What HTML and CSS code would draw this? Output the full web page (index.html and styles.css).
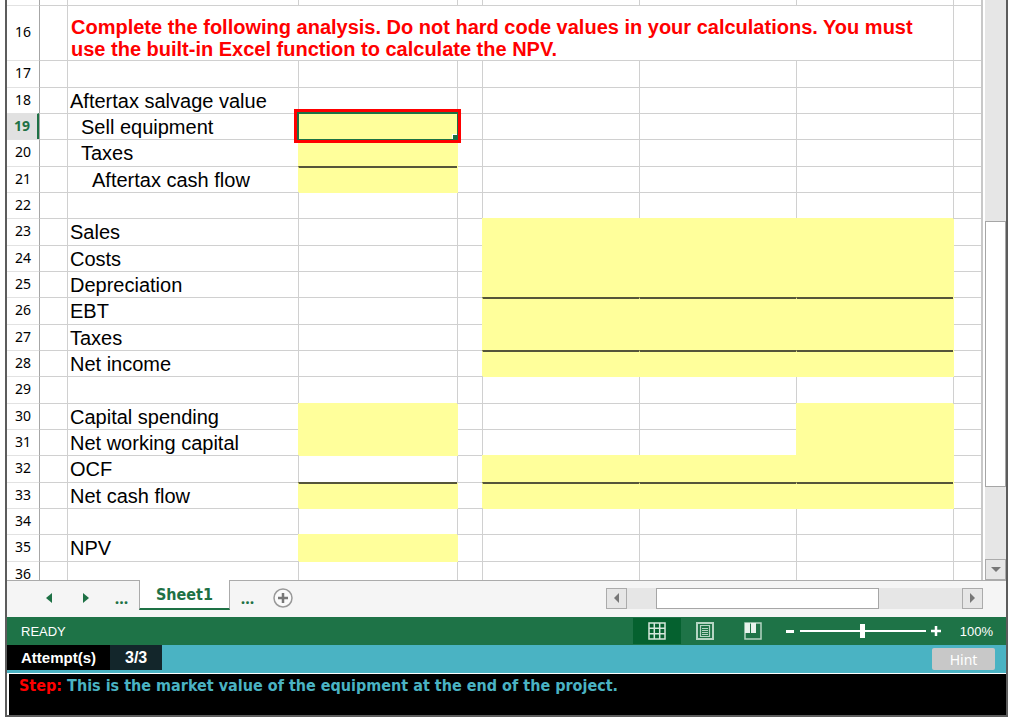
FILE: index.html
```html
<!DOCTYPE html>
<html lang="en">
<head>
    <meta charset="UTF-8">
    <title>Sheet1</title>
    <link rel="stylesheet" href="styles.css">
</head>
<body>
    <div class="window">
        <div class="workspace">
            <div class="sheet">
                <table class="grid">
                    <colgroup>
                        <col class="col-num">
                        <col class="col-a">
                        <col class="col-b">
                        <col class="col-c">
                        <col class="col-d">
                        <col><col><col>
                        <col class="col-h">
                    </colgroup>
                    <tbody>
                        <tr class="row-cut"><th></th><td></td><td></td><td></td><td></td><td></td><td></td><td></td><td></td></tr>
                        <tr class="row-title"><th>16</th><td></td><td class="title" colspan="6">Complete the following analysis. Do not hard code values in your calculations. You must use the built-in Excel function to calculate the NPV.</td><td></td></tr>
                        <tr><th>17</th><td></td><td></td><td></td><td></td><td></td><td></td><td></td><td></td></tr>
                        <tr><th>18</th><td></td><td>Aftertax salvage value</td><td></td><td></td><td></td><td></td><td></td><td></td></tr>
                        <tr><th class="active">19</th><td></td><td class="indent1">Sell equipment</td><td class="fill selected"><input aria-label="Sell equipment"></td><td></td><td></td><td></td><td></td><td></td></tr>
                        <tr><th>20</th><td></td><td class="indent1">Taxes</td><td class="fill"><input aria-label="Taxes on sale"></td><td></td><td></td><td></td><td></td><td></td></tr>
                        <tr><th>21</th><td></td><td class="indent2">Aftertax cash flow</td><td class="fill total"><input aria-label="Aftertax cash flow"></td><td></td><td></td><td></td><td></td><td></td></tr>
                        <tr><th>22</th><td></td><td></td><td></td><td></td><td></td><td></td><td></td><td></td></tr>
                        <tr><th>23</th><td></td><td>Sales</td><td></td><td></td><td class="fill"><input aria-label="Sales year 1"></td><td class="fill"><input aria-label="Sales year 2"></td><td class="fill"><input aria-label="Sales year 3"></td><td></td></tr>
                        <tr><th>24</th><td></td><td>Costs</td><td></td><td></td><td class="fill"><input aria-label="Costs year 1"></td><td class="fill"><input aria-label="Costs year 2"></td><td class="fill"><input aria-label="Costs year 3"></td><td></td></tr>
                        <tr><th>25</th><td></td><td>Depreciation</td><td></td><td></td><td class="fill"><input aria-label="Depreciation year 1"></td><td class="fill"><input aria-label="Depreciation year 2"></td><td class="fill"><input aria-label="Depreciation year 3"></td><td></td></tr>
                        <tr><th>26</th><td></td><td>EBT</td><td></td><td></td><td class="fill total"><input aria-label="EBT year 1"></td><td class="fill total"><input aria-label="EBT year 2"></td><td class="fill total"><input aria-label="EBT year 3"></td><td></td></tr>
                        <tr><th>27</th><td></td><td>Taxes</td><td></td><td></td><td class="fill"><input aria-label="Taxes year 1"></td><td class="fill"><input aria-label="Taxes year 2"></td><td class="fill"><input aria-label="Taxes year 3"></td><td></td></tr>
                        <tr><th>28</th><td></td><td>Net income</td><td></td><td></td><td class="fill total"><input aria-label="Net income year 1"></td><td class="fill total"><input aria-label="Net income year 2"></td><td class="fill total"><input aria-label="Net income year 3"></td><td></td></tr>
                        <tr><th>29</th><td></td><td></td><td></td><td></td><td></td><td></td><td></td><td></td></tr>
                        <tr><th>30</th><td></td><td>Capital spending</td><td class="fill"><input aria-label="Capital spending year 0"></td><td></td><td></td><td></td><td class="fill"><input aria-label="Capital spending year 3"></td><td></td></tr>
                        <tr><th>31</th><td></td><td>Net working capital</td><td class="fill"><input aria-label="Net working capital year 0"></td><td></td><td></td><td></td><td class="fill"><input aria-label="Net working capital year 3"></td><td></td></tr>
                        <tr><th>32</th><td></td><td>OCF</td><td></td><td></td><td class="fill"><input aria-label="OCF year 1"></td><td class="fill"><input aria-label="OCF year 2"></td><td class="fill"><input aria-label="OCF year 3"></td><td></td></tr>
                        <tr><th>33</th><td></td><td>Net cash flow</td><td class="fill total"><input aria-label="Net cash flow year 0"></td><td></td><td class="fill total"><input aria-label="Net cash flow year 1"></td><td class="fill total"><input aria-label="Net cash flow year 2"></td><td class="fill total"><input aria-label="Net cash flow year 3"></td><td></td></tr>
                        <tr><th>34</th><td></td><td></td><td></td><td></td><td></td><td></td><td></td><td></td></tr>
                        <tr><th>35</th><td></td><td>NPV</td><td class="fill"><input aria-label="NPV"></td><td></td><td></td><td></td><td></td><td></td></tr>
                        <tr><th>36</th><td></td><td></td><td></td><td></td><td></td><td></td><td></td><td></td></tr>
                    </tbody>
                </table>
            </div>
            <div class="vscroll">
                <div class="vspace-top"></div>
                <div class="vthumb"></div>
                <div class="vspace-bottom"></div>
                <button class="scroll-btn" aria-label="Scroll down"><svg width="10" height="6"><path d="M0 0h10L5 5z" fill="#777"/></svg></button>
            </div>
        </div>

        <div class="tabs">
            <button class="nav" aria-label="Previous sheet"><svg width="6" height="10"><path d="M6 0v10L0 5z" fill="#1e7145"/></svg></button>
            <button class="nav" aria-label="Next sheet"><svg width="6" height="10"><path d="M0 0v10l6-5z" fill="#1e7145"/></svg></button>
            <button class="more">...</button>
            <button class="tab">Sheet1</button>
            <button class="more">...</button>
            <button class="add" aria-label="Add sheet">
                <svg width="22" height="22"><circle cx="11" cy="11" r="9" fill="#fafafa" stroke="#999" stroke-width="1.5"/><path d="M11 6v10M6 11h10" stroke="#777" stroke-width="2.5"/></svg>
            </button>
            <div class="hscroll">
                <button class="scroll-btn" aria-label="Scroll left"><svg width="5" height="10"><path d="M5 0v10L0 5z" fill="#777"/></svg></button>
                <div class="hspace-left"></div>
                <div class="hthumb"></div>
                <div class="hspace-right"></div>
                <button class="scroll-btn" aria-label="Scroll right"><svg width="5" height="10"><path d="M0 0v10l5-5z" fill="#777"/></svg></button>
            </div>
        </div>

        <div class="status">
            <span class="ready">READY</span>
            <button class="view current" aria-label="Normal view">
                <svg width="18" height="18" fill="none" stroke="#d5e8dc" stroke-width="1.5"><path d="M1 1h16v16H1zM6.3 1v16M11.7 1v16M1 6.3h16M1 11.7h16"/></svg>
            </button>
            <button class="view" aria-label="Page layout">
                <svg width="18" height="18" fill="none" stroke="#b5d5c3"><path d="M1 1h16v16H1z" stroke-width="2"/><path d="M4.500 3.500h9v11h-9zM6 6.500h6M6 8.500h6M6 10.500h6M6 12.500h6" stroke-width="1.2"/></svg>
            </button>
            <button class="view" aria-label="Page break preview">
                <svg width="18" height="18"><path d="M1 1h16v16H1z" fill="none" stroke="#b5d5c3" stroke-width="1.5"/><path d="M1 1h5v10H1zM7 1h5v10H7z" fill="#e8f2ec"/></svg>
            </button>
            <button class="zoom" aria-label="Zoom out"><svg width="8" height="10"><path d="M0 5.500h8" stroke="#fff" stroke-width="3"/></svg></button>
            <input class="slider" type="range" min="0" max="200" value="100" aria-label="Zoom">
            <button class="zoom" aria-label="Zoom in"><svg width="10" height="10"><path d="M0 5h10M5 0v10" stroke="#fff" stroke-width="2.5"/></svg></button>
            <span class="percent">100%</span>
        </div>

        <div class="attempts">
            <span class="attempt-label">Attempt(s)</span>
            <span class="attempt-count">3/3</span>
            <button class="hint">Hint</button>
        </div>

        <div class="step"><span class="step-label">Step:</span> This is the market value of the equipment at the end of the project.</div>
    </div>
</body>
</html>
```
FILE: styles.css
```css
*{
    box-sizing: border-box;
}
body{
    margin: 0;
    background: #fff;
    font-family: "Liberation Sans", Arial, sans-serif;
}
button{
    display: flex;
    align-items: center;
    justify-content: center;
    padding: 0;
    border: 0;
    background: none;
}
.window{
    display: flex;
    flex-direction: column;
    height: calc(100vh - 6px);
    margin: 0 16px 0 5px;
    border: 2px solid #5c5c5c;
    border-top: 0;
}

/* grid */
.workspace{
    display: flex;
    flex: 1;
    min-height: 0;
    gap: 2px;
}
.sheet{
    flex: 1;
    overflow: hidden;
}
.grid{
    width: 100%;
    table-layout: fixed;
    border-spacing: 0;
    border-right: 2px solid #c8c8c8;
}
.col-num{ width: 32px; }
.col-a{ width: 28px; }
.col-b{ width: 231px; }
.col-c{ width: 159px; }
.col-d{ width: 25px; }
.col-h{ width: 28px; }
.grid tr{
    height: 26px;
}
.grid tr:nth-child(3n){
    height: 27px;
}
.grid .row-cut{
    height: 5px;
}
.grid .row-title{
    height: 55px;
}
.grid td{
    padding: 0 0 0 2px;
    border-top: 1px solid #d0d0d0;
    border-left: 1px solid #d0d0d0;
    font-size: 20px;
    line-height: 22px;
    white-space: nowrap;
}
.grid td:nth-child(2){
    border-left-color: #a6a6a6;
}
.grid th{
    padding: 0 0 2px;
    border-top: 1px solid #e2e2e2;
    font: 14px/20px "Noto Sans", sans-serif;
    vertical-align: middle;
}
.grid .row-cut th,
.grid .row-cut td{
    padding: 0;
    border-top: 0;
}
.grid th.active{
    background: #e1e1e1;
    border-right: 2px solid #1e7145;
    color: #1e7145;
    font-weight: bold;
}
.grid .title{
    padding: 10px 24px 0 3px;
    color: #f00;
    font-weight: bold;
    white-space: normal;
}
.grid .indent1{
    padding-left: 13px;
}
.grid .indent2{
    padding-left: 24px;
}
.grid .fill{
    position: relative;
    padding: 0;
    background: #ffff9b;
    border-color: #ffff9b;
    box-shadow: 1px 1px 0 #ffff9b;
}
.grid .total{
    border-top: 2px solid #55553a;
}
.fill input{
    display: block;
    width: 100%;
    height: 22px;
    padding: 0 2px;
    border: 0;
    outline: 0;
    background: none;
    font: 20px "Liberation Sans", Arial, sans-serif;
}
.grid .selected{
    z-index: 1;
    border-color: #1e7145;
    box-shadow: 0 0 0 1px #1e7145, 0 0 0 4px #f00;
}
.selected::after{
    content: "";
    position: absolute;
    right: 0;
    bottom: 0;
    width: 4px;
    height: 4px;
    background: #1e7145;
    border-top: 1px solid #fff;
    border-left: 1px solid #fff;
}

/* scrollbars */
.vscroll{
    display: flex;
    flex-direction: column;
    width: 21px;
    background: #e6e6e6;
}
.vspace-top{ flex: 222; }
.vthumb{
    flex: 265;
    border: 1px solid #a6a6a6;
    background: #fff;
}
.vspace-bottom{ flex: 72; }
.scroll-btn{
    width: 21px;
    height: 21px;
    border: 1px solid #ababab;
    background: #e6e6e6;
}
.hscroll{
    display: flex;
    width: 377px;
    margin-left: auto;
    background: #e6e6e6;
}
.hspace-left{ flex: 29; }
.hthumb{
    flex: 222;
    border: 1px solid #a6a6a6;
    background: #fff;
}
.hspace-right{ flex: 84; }

/* sheet tabs */
.tabs{
    display: flex;
    align-items: center;
    height: 37px;
    padding: 0 23px 2px;
    border-top: 1px solid #ababab;
    background: #f5f5f5;
}
.nav{
    width: 37px;
    height: 20px;
}
.more{
    width: 35px;
    height: 28px;
    color: #1e7145;
    font: bold 16px "Noto Sans", sans-serif;
}
.tab{
    align-self: flex-start;
    width: 91px;
    height: 30px;
    margin-top: -1px;
    border: 1px solid #ababab;
    border-top: 0;
    border-bottom: 2px solid #1e7145;
    background: #fff;
    color: #1e7145;
    font: bold 16px "DejaVu Sans Condensed", "DejaVu Sans", sans-serif;
}
.add{
    width: 35px;
    height: 22px;
}

/* status bar */
.status{
    display: flex;
    align-items: center;
    height: 28px;
    padding: 0 13px 0 14px;
    background: #1e7347;
    color: #fff;
    font-size: 13px;
}
.ready{
    flex: 1;
}
.view{
    width: 48px;
    height: 26px;
}
.view.current{
    background: #05612f;
}
.zoom{
    width: 10px;
    height: 20px;
}
.view + .zoom{
    margin-left: 8px;
}
.slider{
    width: 126px;
    height: 14px;
    margin: 0 5px;
    appearance: none;
    background: linear-gradient(#fff, #fff) center / 100% 2px no-repeat;
}
.slider::-webkit-slider-thumb{
    appearance: none;
    width: 5px;
    height: 14px;
    background: #fff;
}
.percent{
    margin-left: 19px;
}

/* attempts and hint */
.attempts{
    display: flex;
    align-items: flex-start;
    height: 28px;
    background: #4ab3c3;
    color: #fff;
    font-weight: bold;
    line-height: 25px;
}
.attempt-label{
    padding: 0 14px;
    background: #000;
    font-size: 15px;
}
.attempt-count{
    padding: 0 15px;
    background: #13262b;
    font-size: 16px;
}
.hint{
    width: 63px;
    height: 22px;
    margin: 3px 11px 0 auto;
    border-radius: 2px;
    background: #c8c8c8;
    color: #fff;
    font: 14px "Noto Sans", sans-serif;
}
.step{
    height: 42px;
    padding-left: 10px;
    border-top: 1px solid #fff;
    border-left: 2px solid #fff;
    background: #000;
    color: #4ab3c3;
    font: bold 16px/24px "DejaVu Sans Condensed", "DejaVu Sans", sans-serif;
}
.step-label{
    color: #f00;
}
```
